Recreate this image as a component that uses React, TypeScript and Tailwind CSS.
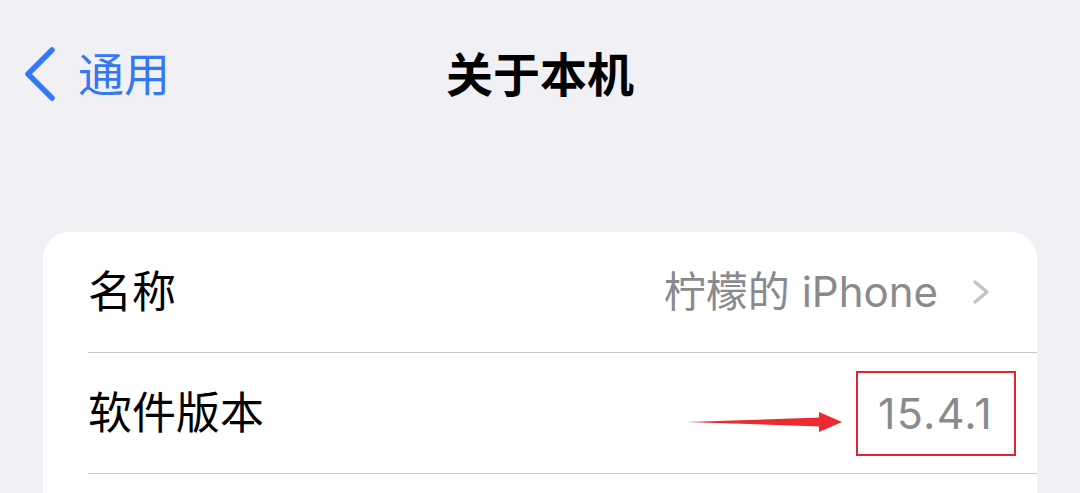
import { ReactNode } from "react";

const font = { fontFamily: 'Inter, "Noto Sans CJK SC", sans-serif' };

function Row({ label, children, className = "" }: { label: string; children?: ReactNode; className?: string }) {
  return (
    <div className={`h-[121px] flex items-center justify-between border-b-[1.5px] border-[#c8c8cc] ${className}`}>
      <span className="text-[44px] text-black leading-none">{label}</span>
      {children}
    </div>
  );
}

export default function App() {
  return (
    <div className="w-[1080px] h-[493px] bg-[#f0f0f5] overflow-hidden" style={font}>
      {/* nav bar */}
      <div className="pt-[44px] h-[104px] grid grid-cols-[1fr_auto_1fr] items-center">
        <div className="flex items-center pl-[22px] gap-[20px] text-[#3478f6]">
          <svg width="36" height="54" viewBox="0 0 36 54" fill="none">
            <path d="M30 3 L6 27 L30 51" stroke="currentColor" strokeWidth="5.5" strokeLinecap="round" strokeLinejoin="round" />
          </svg>
          <span className="text-[46px] leading-none">通用</span>
        </div>
        <h1 className="text-[47px] font-bold text-black leading-none">关于本机</h1>
        <div />
      </div>

      {/* settings group (continues below the fold) */}
      <div className="mt-[128px] mx-[43px] bg-white rounded-t-[26px] pl-[45px] pb-[60px]">
        <Row label="名称" className="pr-[47px]">
          <div className="flex items-center gap-[34px]">
            <span className="text-[42px] text-[#8a8a8e] leading-none">柠檬的 iPhone</span>
            <svg width="18" height="26" viewBox="0 0 18 26" fill="none">
              <path d="M3 3 L15 13 L3 23" stroke="#c4c4c7" strokeWidth="3.5" strokeLinecap="round" strokeLinejoin="round" />
            </svg>
          </div>
        </Row>
        <Row label="软件版本" className="pr-[21px]">
          <div className="flex items-center gap-[13px]">
            <svg width="156" height="22" viewBox="0 0 156 22" className="mt-[18px]">
              <path d="M0 11 L134 6.5 L134 15.5 Z" fill="#ec2a2f" />
              <path d="M132 1 L155 11 L132 21 Z" fill="#ec2a2f" />
            </svg>
            <div className="h-[85px] pl-[20px] pr-[21px] flex items-center border-2 border-[#e0262c]">
              <span className="text-[43px] text-[#8a8a8e] leading-none tracking-[0.03em]">15.4.1</span>
            </div>
          </div>
        </Row>
      </div>
    </div>
  );
}
